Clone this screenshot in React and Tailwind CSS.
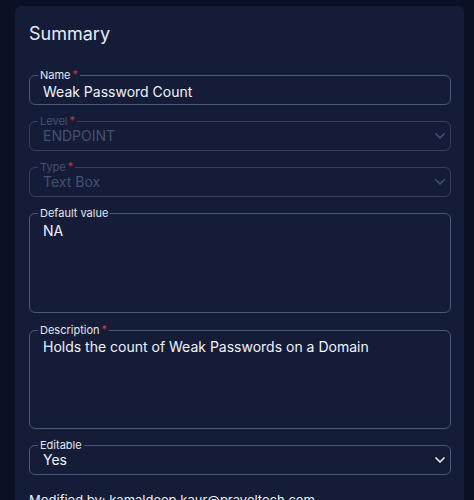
import React from 'react';
import { ChevronDown } from 'lucide-react';

const Req = () => <span className="text-[#c8364a] ml-[2px] relative -top-[1px]">*</span>;

const Field = ({ label, required, disabled, height, children, select }) => (
  <fieldset
    className={`rounded-[6px] border pl-[8px] pr-[2px] ${height} ${
      disabled ? 'border-[#373f5d]' : 'border-[#4c5677]'
    }`}
  >
    <legend
      className={`px-[2px] text-[11px] leading-[14px] ${
        disabled ? 'text-[#465070]' : 'text-[#e3e7f0]'
      }`}
    >
      {label}
      {required && <Req />}
    </legend>
    <div className={`flex items-center justify-between pl-[5px] ${select ? '-mt-[2px]' : ''}`}>
      <div
        className={`text-[14px] leading-[20px] ${
          disabled ? 'text-[#465070]' : 'text-[#f1f3f8]'
        }`}
      >
        {children}
      </div>
      {select && (
        <ChevronDown
          size={16}
          strokeWidth={2.5}
          className={disabled ? 'text-[#465070]' : 'text-[#f1f3f8]'}
        />
      )}
    </div>
  </fieldset>
);

export default function App() {
  return (
    <div
      className="h-[500px] w-[474px] overflow-hidden bg-[#0b1124] pl-[15px] pt-[6px]"
      style={{ fontFamily: 'Inter, "Noto Sans", sans-serif' }}
    >
      <div className="w-[449px] rounded-t-[6px] bg-[#141c38] pl-[14px] pr-[13px] pt-[14px]">
        <h1 className="text-[18px] leading-[28px] text-[#e8ebf2]">Summary</h1>

        <div className="mt-[20px] flex flex-col gap-[9px]">
          <Field label="Name" required height="h-[37px]">
            Weak Password Count
          </Field>
          <Field label="Level" required disabled select height="h-[37px]">
            ENDPOINT
          </Field>
          <Field label="Type" required disabled select height="h-[37px]">
            Text Box
          </Field>
          <Field label="Default value" height="h-[107px]">
            <span className="block pt-[1px]">NA</span>
          </Field>
          <div className="mt-[1px]">
            <Field label="Description" required height="h-[106px]">
              Holds the count of Weak Passwords on a Domain
            </Field>
          </div>
          <Field label="Editable" select height="h-[37px]">
            Yes
          </Field>
        </div>

        <p className="mt-[15px] text-[13px] leading-[20px] text-[#eef0f6]">
          Modified by: kamaldeep.kaur@praveltech.com
        </p>
      </div>
    </div>
  );
}
